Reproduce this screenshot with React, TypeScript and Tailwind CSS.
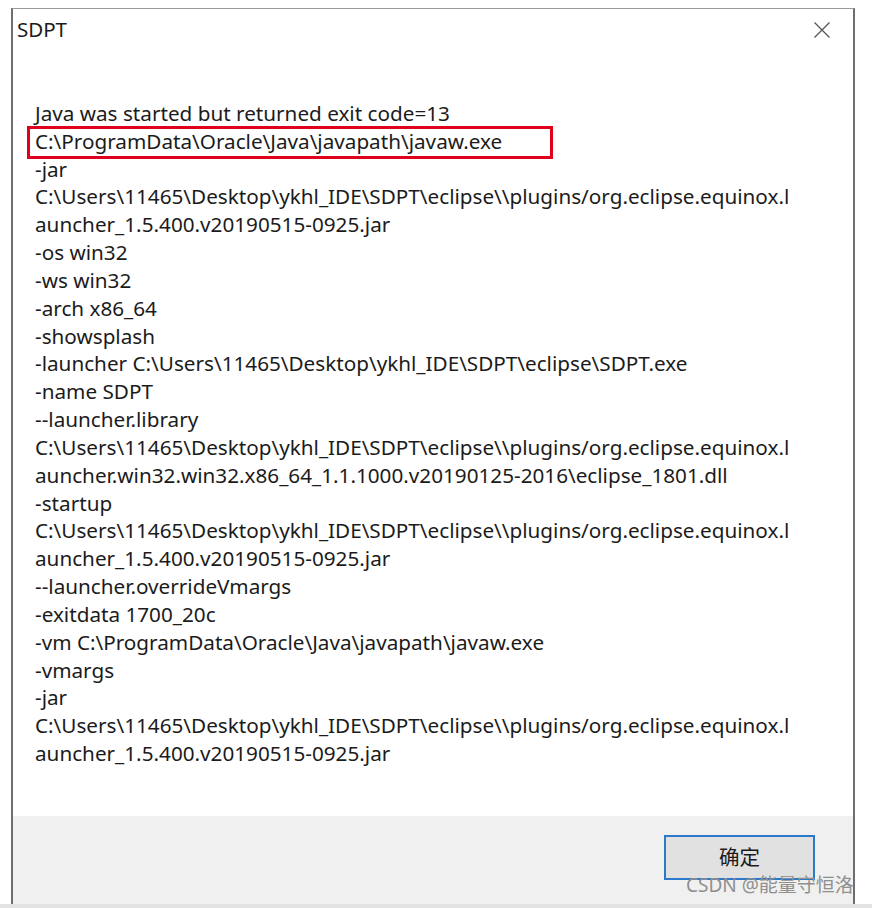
import React from "react";

const lines: string[] = [
    "Java was started but returned exit code=13",
    "C:\\ProgramData\\Oracle\\Java\\javapath\\javaw.exe",
    "-jar",
    "C:\\Users\\11465\\Desktop\\ykhl_IDE\\SDPT\\eclipse\\\\plugins/org.eclipse.equinox.l",
    "auncher_1.5.400.v20190515-0925.jar",
    "-os win32",
    "-ws win32",
    "-arch x86_64",
    "-showsplash",
    "-launcher C:\\Users\\11465\\Desktop\\ykhl_IDE\\SDPT\\eclipse\\SDPT.exe",
    "-name SDPT",
    "--launcher.library",
    "C:\\Users\\11465\\Desktop\\ykhl_IDE\\SDPT\\eclipse\\\\plugins/org.eclipse.equinox.l",
    "auncher.win32.win32.x86_64_1.1.1000.v20190125-2016\\eclipse_1801.dll",
    "-startup",
    "C:\\Users\\11465\\Desktop\\ykhl_IDE\\SDPT\\eclipse\\\\plugins/org.eclipse.equinox.l",
    "auncher_1.5.400.v20190515-0925.jar",
    "--launcher.overrideVmargs",
    "-exitdata 1700_20c",
    "-vm C:\\ProgramData\\Oracle\\Java\\javapath\\javaw.exe",
    "-vmargs",
    "-jar",
    "C:\\Users\\11465\\Desktop\\ykhl_IDE\\SDPT\\eclipse\\\\plugins/org.eclipse.equinox.l",
    "auncher_1.5.400.v20190515-0925.jar",
];

const font = "font-['Noto_Sans','Noto_Sans_CJK_SC',sans-serif]";

export default function App() {
    return (
        <div className={`relative w-[872px] h-[908px] bg-white ${font} text-[#1b1b1b]`}>
            <div className="pt-[8px] pl-[11px]">
                <div className="w-[844px] h-[896px] flex flex-col border-t border-t-[#9a9a9a] border-l-2 border-l-[#6e6e6e] border-r-2 border-r-[#6e6e6e] bg-white">
                    {/* Title bar */}
                    <div className="h-[44px] flex items-center justify-between pl-[4px] pr-[22px] pb-[3px]">
                        <span className="text-[20.5px] leading-none">SDPT</span>
                        <svg width="18" height="18" viewBox="0 0 18 18" fill="none">
                            <path d="M1.5 1.5L16.5 16.5M16.5 1.5L1.5 16.5" stroke="#555" strokeWidth="1.3" />
                        </svg>
                    </div>

                    {/* Message */}
                    <div className="flex-1 pl-[22px] pt-[47px]">
                        {lines.map((line, i) => (
                            <div key={i} className="relative h-[27.83px] leading-[27.83px] text-[20.7px] whitespace-nowrap">
                                {i === 1 && (
                                    <span className="absolute left-[-8px] top-[-2px] w-[526px] h-[33px] border-[3px] border-[#e0001b]" />
                                )}
                                {line}
                            </div>
                        ))}
                    </div>

                    {/* Footer */}
                    <div className="h-[88px] bg-[#f0f0f0] flex justify-end items-start pt-[19px] pr-[38px]">
                        <button className="w-[151px] h-[45px] border-2 border-[#2b79c9] bg-[#e1e1e1] text-[20.5px] leading-none flex items-center justify-center">
                            <span className="px-[2px]">确定</span>
                        </button>
                    </div>
                </div>
            </div>
            <div className="absolute left-0 right-0 top-[904px] h-[4px] bg-[#e3e3e3]" />
            <div className="absolute left-[686px] top-[876px] text-[19px] leading-none text-[#8f8f8f]">
                CSDN @能量守恒洛
            </div>
        </div>
    );
}
